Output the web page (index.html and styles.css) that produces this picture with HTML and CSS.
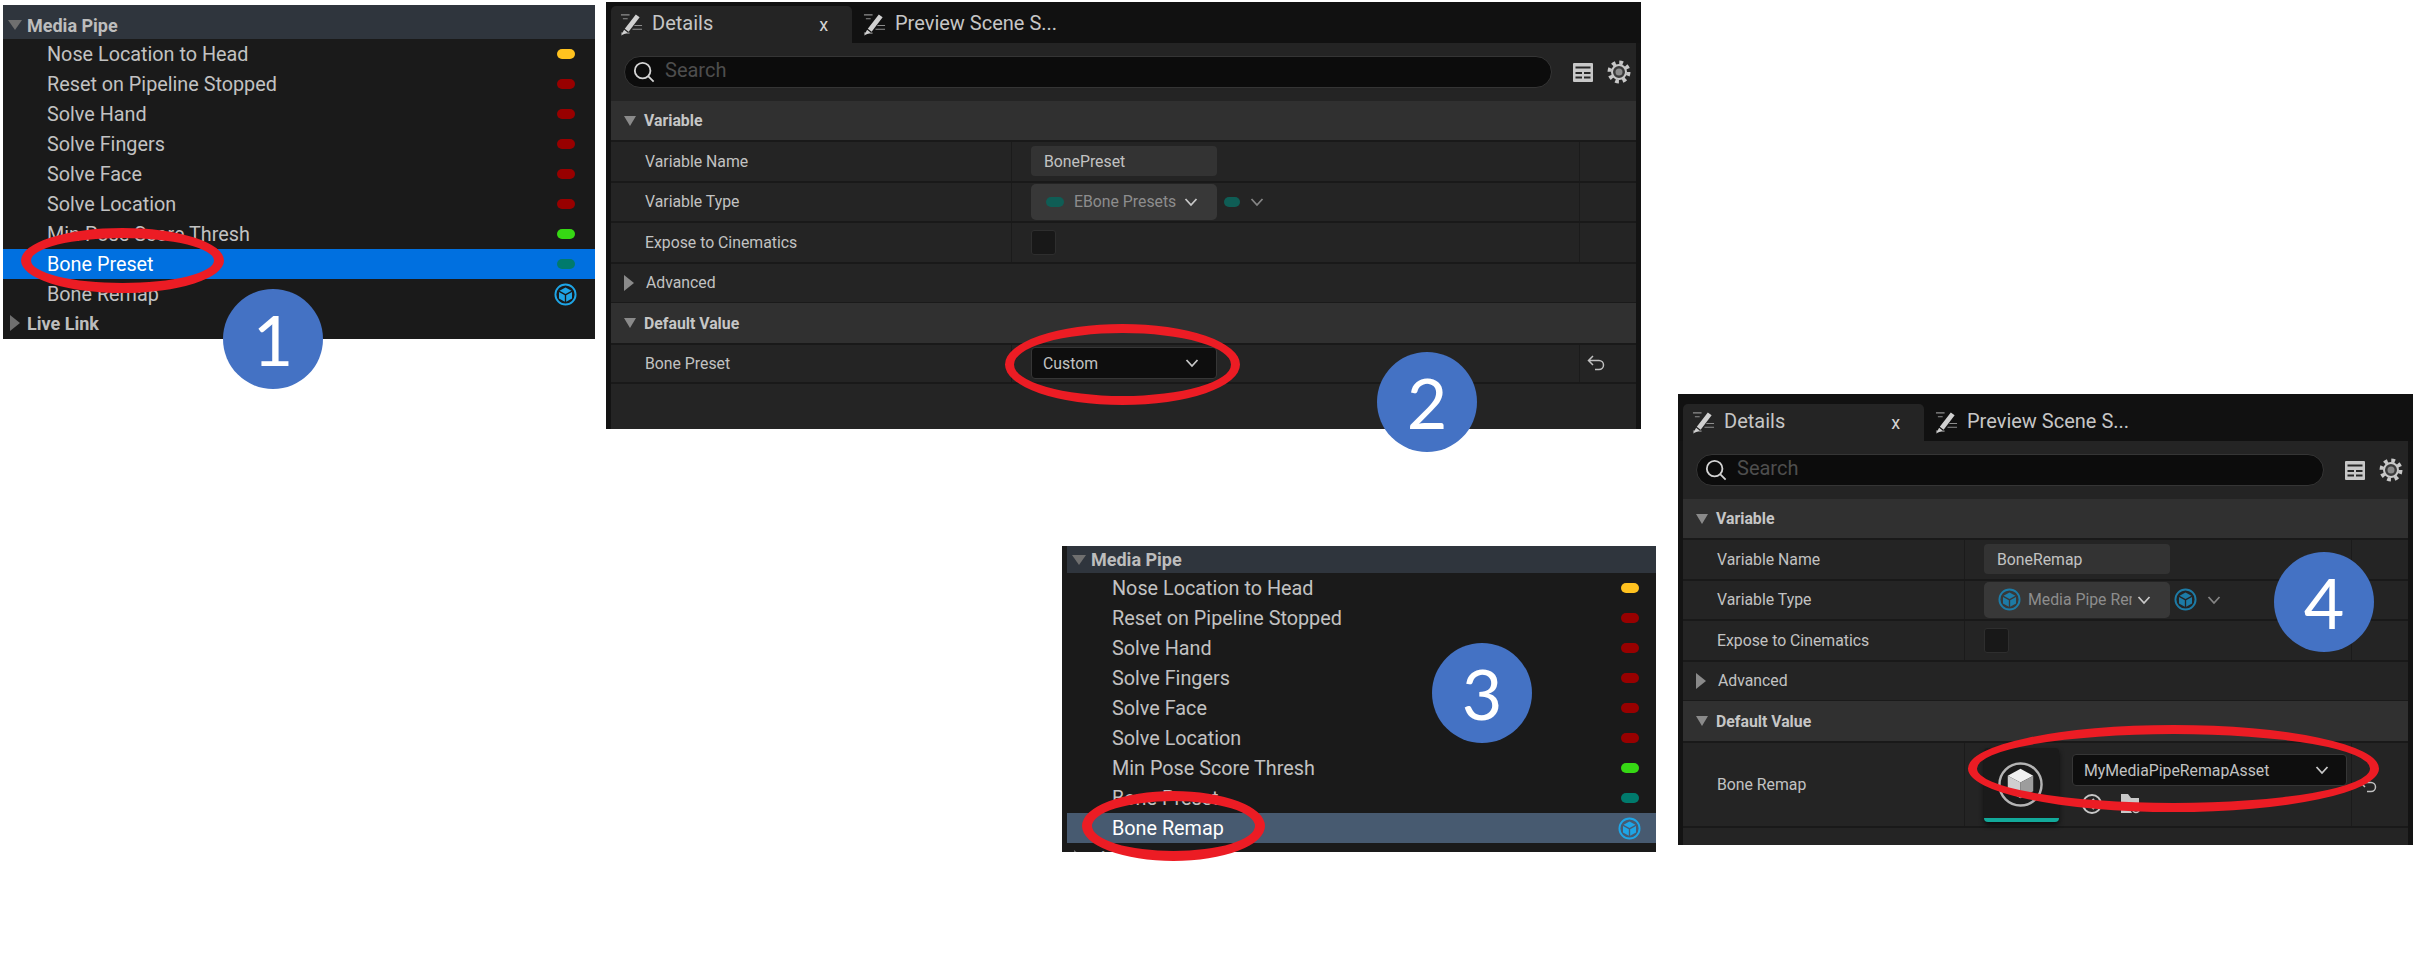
FILE: index.html
```html
<!DOCTYPE html>
<html lang="en">
<head>
    <meta charset="UTF-8">
    <title>Bone Preset and Bone Remap variables</title>
    <link rel="stylesheet" href="styles.css">
</head>
<body>
    <svg class="icon-defs" width="0" height="0">
        <symbol id="i-pencil" viewBox="0 0 24 24">
            <path d="M1 2h9M3 6h5M13 17h10M10 21H1M15 13h8" fill="none" stroke="#8d8d8d" stroke-width="1.2"/>
            <path d="M16.5 1.5l4 3L9 19.5l-4-3zM4.3 17.5l3.6 2.8L1 23.5z" fill="#d0d0d0"/>
        </symbol>
        <symbol id="i-search" viewBox="0 0 24 24">
            <circle cx="10.5" cy="10.5" r="8.5" fill="none" stroke="#d4d4d4" stroke-width="2"/>
            <path d="M16.5 16.5l6 6" stroke="#d4d4d4" stroke-width="2"/>
        </symbol>
        <symbol id="i-table" viewBox="0 0 22 21">
            <rect x="1" y="1" width="20" height="19" rx="1" fill="#c8c8c8"/>
            <path d="M3.5 4.5h15v2h-15zM3.5 10h6.5v2H3.5zM12 10h6.500v2H12zM3.5 14.500h6.500v2H3.5zM12 14.500h6.500v2H12z" fill="#262626"/>
        </symbol>
        <symbol id="i-gear" viewBox="0 0 24 24">
            <circle cx="12" cy="12" r="9.500" fill="none" stroke="#c8c8c8" stroke-width="4" stroke-dasharray="3.730 3.730"/>
            <circle cx="12" cy="12" r="7" fill="#3a3a3a" stroke="#c8c8c8" stroke-width="2"/>
            <circle cx="12" cy="12" r="3.500" fill="#8a8a8a"/>
        </symbol>
        <symbol id="i-cube" viewBox="0 0 24 24">
            <circle cx="12" cy="12" r="10.500" fill="none" stroke="currentColor" stroke-width="2"/>
            <path d="M12 4.800l6.200 3.400-6.200 3.400-6.200-3.400z" fill="currentColor"/>
            <path d="M5.200 9.400l6.100 3.400v6.800l-6.100-3.400zM18.800 9.400l-6.100 3.400v6.800l6.100-3.400z" fill="currentColor"/>
        </symbol>
        <symbol id="i-chevron" viewBox="0 0 14 10">
            <path d="M1.500 2l5.500 6 5.500-6" fill="none" stroke="currentColor" stroke-width="1.800"/>
        </symbol>
        <symbol id="i-reset" viewBox="0 0 18 16">
            <path d="M6 1L1.500 5.500 6 10M1.500 5.500H12a4.500 4.500 0 0 1 0 9H8" fill="none" stroke="#c0c0c0" stroke-width="1.500"/>
        </symbol>
    </svg>

    <section class="outliner outliner-a">
        <div class="cat-head cat-open"><span class="caret-down"></span>Media Pipe</div>
        <div class="row"><span>Nose Location to Head</span><i class="pill pill-yellow"></i></div>
        <div class="row"><span>Reset on Pipeline Stopped</span><i class="pill pill-red"></i></div>
        <div class="row"><span>Solve Hand</span><i class="pill pill-red"></i></div>
        <div class="row"><span>Solve Fingers</span><i class="pill pill-red"></i></div>
        <div class="row"><span>Solve Face</span><i class="pill pill-red"></i></div>
        <div class="row"><span>Solve Location</span><i class="pill pill-red"></i></div>
        <div class="row"><span>Min Pose Score Thresh</span><i class="pill pill-green"></i></div>
        <div class="row row-active"><span>Bone Preset</span><i class="pill pill-teal"></i></div>
        <div class="row"><span>Bone Remap</span><svg class="row-cube"><use href="#i-cube"/></svg></div>
        <div class="cat-head cat-last"><span class="caret-right"></span>Live Link</div>
    </section>

    <section class="details details-a">
        <div class="tabs">
            <div class="tab tab-on"><svg class="tab-icon"><use href="#i-pencil"/></svg><span class="tab-label">Details</span><span class="tab-x">x</span></div>
            <div class="tab"><svg class="tab-icon"><use href="#i-pencil"/></svg><span class="tab-label">Preview Scene S...</span></div>
        </div>
        <div class="search-row">
            <div class="search"><svg class="search-icon"><use href="#i-search"/></svg><span class="search-text">Search</span></div>
            <svg class="tool-table"><use href="#i-table"/></svg>
            <svg class="tool-gear"><use href="#i-gear"/></svg>
        </div>
        <div class="section"><span class="caret-down caret-small"></span>Variable</div>
        <div class="prop">
            <div class="prop-name">Variable Name</div>
            <div class="prop-value"><div class="text-input">BonePreset</div></div>
            <div class="prop-reset"></div>
        </div>
        <div class="prop">
            <div class="prop-name">Variable Type</div>
            <div class="prop-value">
                <div class="type-btn"><i class="pill pill-dim"></i><span class="type-name">EBone Presets</span><svg class="chevron"><use href="#i-chevron"/></svg></div>
                <i class="pill pill-dim pill-out"></i><svg class="chevron chevron-dim"><use href="#i-chevron"/></svg>
            </div>
            <div class="prop-reset"></div>
        </div>
        <div class="prop">
            <div class="prop-name">Expose to Cinematics</div>
            <div class="prop-value"><div class="checkbox"></div></div>
            <div class="prop-reset"></div>
        </div>
        <div class="prop prop-fold"><span class="caret-right caret-gap"></span>Advanced</div>
        <div class="section section-gap"><span class="caret-down caret-small"></span>Default Value</div>
        <div class="prop">
            <div class="prop-name">Bone Preset</div>
            <div class="prop-value"><div class="combo">Custom<svg class="chevron"><use href="#i-chevron"/></svg></div></div>
            <div class="prop-reset"><svg class="reset-icon"><use href="#i-reset"/></svg></div>
        </div>
    </section>

    <section class="outliner outliner-b">
        <div class="cat-head cat-open"><span class="caret-down"></span>Media Pipe</div>
        <div class="row"><span>Nose Location to Head</span><i class="pill pill-yellow"></i></div>
        <div class="row"><span>Reset on Pipeline Stopped</span><i class="pill pill-red"></i></div>
        <div class="row"><span>Solve Hand</span><i class="pill pill-red"></i></div>
        <div class="row"><span>Solve Fingers</span><i class="pill pill-red"></i></div>
        <div class="row"><span>Solve Face</span><i class="pill pill-red"></i></div>
        <div class="row"><span>Solve Location</span><i class="pill pill-red"></i></div>
        <div class="row"><span>Min Pose Score Thresh</span><i class="pill pill-green"></i></div>
        <div class="row"><span>Bone Preset</span><i class="pill pill-teal"></i></div>
        <div class="row row-muted"><span>Bone Remap</span><svg class="row-cube"><use href="#i-cube"/></svg></div>
        <div class="cat-head"><span class="caret-right"></span>Live Link</div>
    </section>

    <section class="details details-b">
        <div class="tabs">
            <div class="tab tab-on"><svg class="tab-icon"><use href="#i-pencil"/></svg><span class="tab-label">Details</span><span class="tab-x">x</span></div>
            <div class="tab"><svg class="tab-icon"><use href="#i-pencil"/></svg><span class="tab-label">Preview Scene S...</span></div>
        </div>
        <div class="search-row">
            <div class="search"><svg class="search-icon"><use href="#i-search"/></svg><span class="search-text">Search</span></div>
            <svg class="tool-table"><use href="#i-table"/></svg>
            <svg class="tool-gear"><use href="#i-gear"/></svg>
        </div>
        <div class="section"><span class="caret-down caret-small"></span>Variable</div>
        <div class="prop">
            <div class="prop-name">Variable Name</div>
            <div class="prop-value"><div class="text-input">BoneRemap</div></div>
            <div class="prop-reset"></div>
        </div>
        <div class="prop">
            <div class="prop-name">Variable Type</div>
            <div class="prop-value">
                <div class="type-btn"><svg class="type-cube"><use href="#i-cube"/></svg><span class="type-name type-cut">Media Pipe Remap</span><svg class="chevron"><use href="#i-chevron"/></svg></div>
                <svg class="type-cube type-cube-out"><use href="#i-cube"/></svg><svg class="chevron chevron-dim"><use href="#i-chevron"/></svg>
            </div>
            <div class="prop-reset"></div>
        </div>
        <div class="prop">
            <div class="prop-name">Expose to Cinematics</div>
            <div class="prop-value"><div class="checkbox"></div></div>
            <div class="prop-reset"></div>
        </div>
        <div class="prop prop-fold"><span class="caret-right caret-gap"></span>Advanced</div>
        <div class="section section-gap"><span class="caret-down caret-small"></span>Default Value</div>
        <div class="prop prop-tall">
            <div class="prop-name">Bone Remap</div>
            <div class="prop-value">
                <div class="thumb">
                    <svg class="thumb-art" viewBox="0 0 48 48">
                        <circle cx="24" cy="24" r="21.500" fill="none" stroke="#b4b4b4" stroke-width="2.500"/>
                        <path d="M24 8l13 7-13 7-13-7z" fill="#f0f0f0"/>
                        <path d="M11 15l13 7v16l-13-7z" fill="#cfcfcf"/>
                        <path d="M37 15l-13 7v16l13-7z" fill="#9d9d9d"/>
                    </svg>
                </div>
                <div class="asset">
                    <div class="combo combo-wide">MyMediaPipeRemapAsset<svg class="chevron"><use href="#i-chevron"/></svg></div>
                    <div class="asset-tools">
                        <svg class="asset-tool" viewBox="0 0 22 22"><circle cx="11" cy="11" r="9" fill="none" stroke="#c8c8c8" stroke-width="2"/><path d="M13 6l-5 5 5 5" fill="none" stroke="#c8c8c8" stroke-width="2"/></svg>
                        <svg class="asset-tool" viewBox="0 0 22 22"><path d="M2 1h7l3 4h8v8a5 5 0 0 0-7 7H2z" fill="#c8c8c8"/><circle cx="17" cy="16" r="3.500" fill="none" stroke="#c8c8c8" stroke-width="1.500"/></svg>
                    </div>
                </div>
            </div>
            <div class="prop-reset"><svg class="reset-icon"><use href="#i-reset"/></svg></div>
        </div>
    </section>

    <div class="ring ring-1"></div>
    <div class="ring ring-2"></div>
    <div class="ring ring-3"></div>
    <div class="ring ring-4"></div>
    <div class="badge badge-1">1</div>
    <div class="badge badge-2">2</div>
    <div class="badge badge-3">3</div>
    <div class="badge badge-4">4</div>
</body>
</html>
```

FILE: styles.css
```css
* {
    box-sizing: border-box;
}
body {
    position: relative;
    width: 2420px;
    height: 966px;
    margin: 0;
    overflow: hidden;
    background: #fff;
    color: #c2c2c2;
    font-family: Roboto, "Liberation Sans", sans-serif;
}
.icon-defs {
    position: absolute;
}
svg {
    display: block;
    flex: none;
}

/* the four screenshots sit freely on the page */
.outliner, .details {
    position: absolute;
    overflow: hidden;
}
.outliner {
    background: #1a1a1a;
    font-size: 19.8px;
}
.outliner-a {
    left: 3px;
    top: 5px;
    width: 592px;
    height: 334px;
}
.outliner-b {
    left: 1062px;
    top: 546px;
    width: 594px;
    height: 306px;
    padding-left: 5px;
}
.details {
    display: flex;
    flex-direction: column;
    padding: 0 5px;
    background: #242424;
    font-size: 15.8px;
}
.details-a {
    left: 606px;
    top: 2px;
    width: 1035px;
    height: 427px;
    --cols: 400px 568px 1fr;
    --tabs-h: 41px;
    --tab-h: 37px;
    box-shadow: inset 5px 0 #131313, inset -5px 0 #131313;
}
.details-b {
    left: 1678px;
    top: 394px;
    width: 735px;
    height: 451px;
    --cols: 281px 387px 1fr;
    --tabs-h: 47px;
    --tab-h: 37px;
    box-shadow: inset 5px 0 #131313, inset -5px 0 #131313;
}

/* outliner rows */
.cat-head {
    display: flex;
    align-items: center;
    height: 30px;
    padding-left: 24px;
    font-size: 18px;
    font-weight: 700;
    color: #bdbdbd;
}
.cat-open {
    background: #2f353d;
}
.cat-last {
    padding-bottom: 2px;
}
.outliner-a .cat-open {
    height: 34px;
    padding-top: 6px;
}
.outliner-b .cat-open {
    height: 27px;
}
.row {
    display: flex;
    align-items: center;
    justify-content: space-between;
    height: 30px;
    padding: 0 20px 0 44px;
}
.row-active {
    background: #0070e0;
    color: #fff;
}
.row-muted {
    background: #475a70;
    color: #fff;
}
.outliner-b .row {
    padding-left: 45px;
    padding-right: 17px;
}
.pill {
    display: block;
    flex: none;
    width: 18px;
    height: 10px;
    border-radius: 5px;
}
.pill-yellow { background: #ffc21f; }
.pill-red { background: #980000; }
.pill-green { background: #36d814; }
.pill-teal { background: #007a6c; }
.pill-dim { background: #0f5d55; }
.row-cube {
    width: 23px;
    height: 23px;
    margin-right: -2px;
    color: #1ea5e6;
}

/* carets */
.caret-down, .caret-right {
    flex: none;
    width: 0;
    height: 0;
}
.caret-down {
    margin: 0 5px 0 -19px;
    border-left: 7px solid transparent;
    border-right: 7px solid transparent;
    border-top: 10px solid #6f6f6f;
}
.caret-right {
    margin: 0 7px 0 -17px;
    border-top: 8px solid transparent;
    border-bottom: 8px solid transparent;
    border-left: 10px solid #6f6f6f;
}
.caret-small {
    margin: 0 8px 0 -21px;
    border-left-width: 6px;
    border-right-width: 6px;
    border-top-width: 10px;
    border-top-color: #8a8a8a;
}
.caret-gap {
    margin: 0 12px 0 -21px;
    border-left-color: #8a8a8a;
}

/* tabs and search */
.tabs {
    display: flex;
    flex: none;
    align-items: flex-end;
    height: var(--tabs-h);
    margin: 0 -5px;
    padding-left: 5px;
    background: #111;
    font-size: 20px;
}
.tab {
    display: flex;
    align-items: center;
    gap: 9px;
    height: var(--tab-h);
    padding-left: 11px;
    color: #c6c6c6;
}
.tab-on {
    width: 241px;
    padding-left: 9px;
    border-radius: 5px 5px 0 0;
    background: #242424;
}
.tab-icon {
    width: 23px;
    height: 23px;
}
.tab-label {
    padding-bottom: 3px;
}
.tab-x {
    margin-left: 97px;
    font-size: 18px;
    color: #d4d4d4;
}
.search-row {
    display: flex;
    flex: none;
    align-items: center;
    height: 58px;
    padding: 0 0 0 13px;
}
.search {
    display: flex;
    flex: 1;
    align-items: center;
    gap: 10px;
    height: 32px;
    padding-left: 8px;
    border: 1px solid #353535;
    border-radius: 16px;
    background: #0c0c0c;
    color: #4e4e4e;
    font-size: 20px;
}
.search-icon {
    width: 22px;
    height: 22px;
}
.search-text {
    padding-bottom: 4px;
}
.tool-table {
    width: 22px;
    height: 21px;
    margin-left: 20px;
}
.tool-gear {
    width: 24px;
    height: 24px;
    margin: 0 5px 0 13px;
}

/* property rows */
.section {
    display: flex;
    flex: none;
    align-items: center;
    height: 39px;
    padding-left: 34px;
    background: #303030;
    font-weight: 700;
    color: #c6c6c6;
}
.section-gap {
    height: 41px;
    border-top: 1px solid #1a1a1a;
}
.prop {
    display: grid;
    flex: none;
    grid-template-columns: var(--cols);
    height: 40.5px;
    border-top: 2px solid #191919;
}
.prop-name {
    display: flex;
    align-items: center;
    padding-left: 34px;
}
.prop-value {
    display: flex;
    align-items: center;
    padding-left: 19px;
    border-left: 1px solid #1b1b1b;
}
.prop-reset {
    display: flex;
    align-items: center;
    padding-left: 7px;
    border-left: 1px solid #1b1b1b;
}
.prop-fold {
    display: flex;
    align-items: center;
    padding-left: 34px;
}
.prop-tall {
    height: 87px;
    border-bottom: 2px solid #191919;
}
.details-a .prop:last-child {
    border-bottom: 2px solid #191919;
}
.text-input {
    display: flex;
    align-items: center;
    width: 186px;
    height: 30px;
    padding-left: 13px;
    border-radius: 4px;
    background: #333;
}
.type-btn {
    display: flex;
    align-items: center;
    width: 186px;
    height: 36px;
    padding: 0 19px 0 15px;
    border-radius: 5px;
    background: #383838;
}
.type-name {
    margin-left: 10px;
    color: #8d8d8d;
    white-space: nowrap;
}
.type-cut {
    width: 104px;
    margin-left: 7px;
    overflow: hidden;
}
.type-cube {
    width: 23px;
    height: 23px;
    color: #1d7ba6;
    margin-left: -1px;
}
.type-cube-out {
    margin-left: 4px;
}
.pill-out {
    width: 16px;
    margin-left: 7px;
}
.chevron {
    width: 14px;
    height: 10px;
    margin-left: auto;
    color: #c8c8c8;
}
.chevron-dim {
    margin-left: 10px;
    color: #858585;
}
.checkbox {
    width: 25px;
    height: 25px;
    border: 1px solid #2e2e2e;
    border-radius: 3px;
    background: #181818;
}
.combo {
    display: flex;
    align-items: center;
    width: 186px;
    height: 32px;
    padding: 0 17px 0 11px;
    border: 1px solid #363636;
    border-radius: 4px;
    background: #0e0e0e;
}
.combo-wide {
    width: 275px;
}
.reset-icon {
    width: 18px;
    height: 16px;
}
.thumb {
    display: flex;
    flex: none;
    align-items: center;
    justify-content: center;
    width: 75px;
    height: 74px;
    padding: 3px 3px 0 0;
    border-bottom: 4px solid #12a99a;
    border-radius: 4px;
    background: #1a1a1a;
    box-shadow: 0 3px 5px #0c0c0c;
}
.thumb-art {
    width: 47px;
    height: 47px;
}
.asset {
    display: flex;
    flex-direction: column;
    margin-left: 13px;
}
.asset-tools {
    display: flex;
    gap: 16px;
    margin: 7px 0 0 9px;
}
.asset-tool {
    width: 22px;
    height: 22px;
}

/* callouts drawn over the screenshots */
.ring {
    position: absolute;
    border: 9px solid #ec1c24;
    border-radius: 50%;
}
.ring-1 { left: 21px; top: 228px; width: 203px; height: 65px; border-width: 10px; }
.ring-2 { left: 1005px; top: 324px; width: 235px; height: 81px; }
.ring-3 { left: 1082px; top: 791px; width: 183px; height: 70px; border-width: 10px; }
.ring-4 { left: 1968px; top: 725px; width: 411px; height: 87px; }
.badge {
    position: absolute;
    display: flex;
    align-items: center;
    justify-content: center;
    width: 100px;
    height: 100px;
    border-radius: 50%;
    background: #4472c4;
    color: #fff;
    font-family: Lato, sans-serif;
    font-size: 70px;
}
.badge-1 { left: 223px; top: 289px; }
.badge-2 { left: 1377px; top: 352px; }
.badge-3 { left: 1432px; top: 643px; }
.badge-4 { left: 2274px; top: 552px; }
```
